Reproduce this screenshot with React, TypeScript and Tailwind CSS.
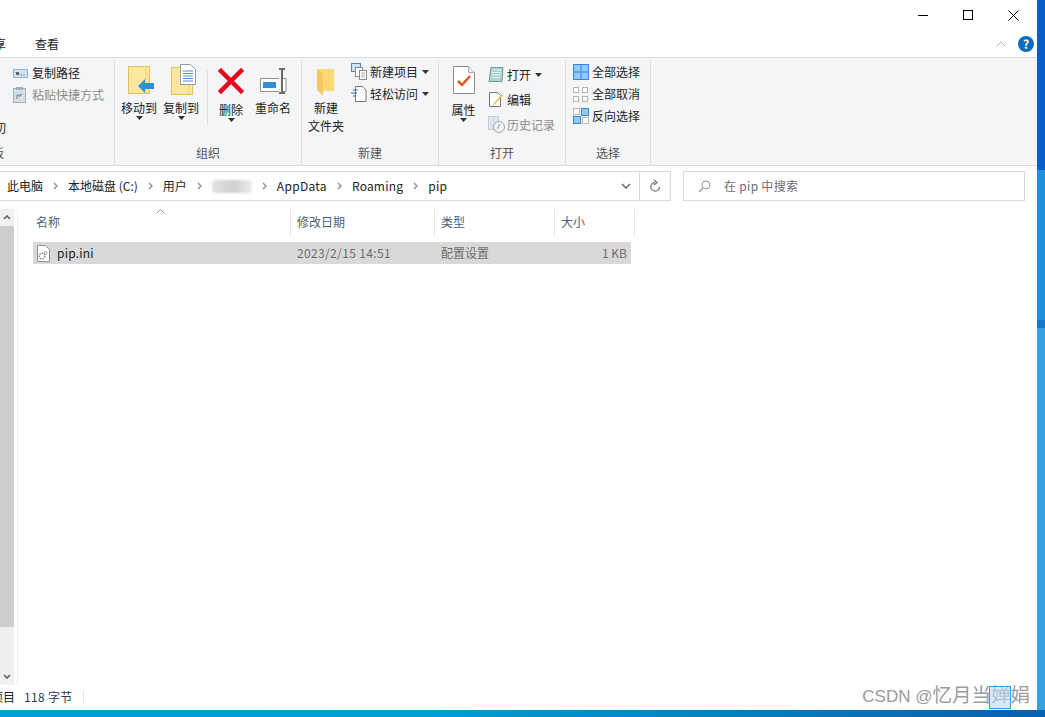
import { FC, ReactNode } from 'react';

const FONT = "font-['Noto_Sans_CJK_SC','Microsoft_YaHei',sans-serif]";

const Arrow: FC = () => (
  <svg width="7" height="4" viewBox="0 0 7 4">
    <path d="M0 0h7L3.5 4z" fill="#333" />
  </svg>
);

const Folder: FC = () => (
  <>
    <rect x="0.5" y="0.5" width="21" height="27" fill="#fde79f" stroke="#e6c163" />
    <path d="M18 1v26" stroke="#f1cf78" />
  </>
);

const MoveIcon: FC = () => (
  <svg width="34" height="29" viewBox="-6 0 34 29">
    <Folder />
    <path d="M10 20l7-7v4h9v6h-9v4z" fill="#2f8fdd" />
  </svg>
);

const CopyIcon: FC = () => (
  <svg width="36" height="31" viewBox="-8 0 36 31">
    <g transform="translate(0 3)">
      <Folder />
    </g>
    <path d="M9.5 .5h10l5 5v15h-15z" fill="#fff" stroke="#9a9a9a" />
    <path d="M12 7h10M12 9.500h10M12 12h10M12 14.500h10M12 17h10" stroke="#4d8fd8" />
  </svg>
);

const DeleteIcon: FC = () => (
  <svg width="26" height="28" viewBox="0 -1 26 28">
    <path d="M3 3l20 20M23 3L3 23" stroke="#e00b1c" strokeWidth="4.500" strokeLinecap="square" />
  </svg>
);

const RenameIcon: FC = () => (
  <svg width="30" height="28" viewBox="0 -1 30 28">
    <path d="M21 10.500H2.500v13H21M25 10.500h3v13h-3" fill="#fff" stroke="#8f8f8f" />
    <rect x="5" y="14" width="13" height="6" fill="#2f8fdd" />
    <path d="M21 1h6M21 25h6M24 1v24" stroke="#6b6b6b" strokeWidth="2" />
  </svg>
);

const NewFolderIcon: FC = () => (
  <svg width="20" height="28" viewBox="0 0 20 28">
    <path d="M1 1h17v22H7z" fill="#fdd976" />
    <path d="M1 1l6 5v22l-6-6z" fill="#f5c765" />
  </svg>
);

const NewItemIcon: FC = () => (
  <svg width="17" height="18" viewBox="0 0 17 18">
    <rect x="0.500" y="0.500" width="9" height="8" fill="#cfe3f5" stroke="#4a86c0" />
    <rect x="4.500" y="4.500" width="7" height="9" fill="#fff" stroke="#8a8a8a" />
    <rect x="8.500" y="7.500" width="7" height="9" fill="#fff" stroke="#8a8a8a" />
    <path d="M10 10h4M10 12h4M10 14h4" stroke="#b0b0b0" />
  </svg>
);

const EasyAccessIcon: FC = () => (
  <svg width="16" height="18" viewBox="0 0 16 18">
    <path d="M4.500 1.500h7l3.500 3.500v11.500h-10.500z" fill="#fff" stroke="#777" />
    <path d="M0 8h6M2 5h5M2 11h3" stroke="#2b6cb5" />
  </svg>
);

const PropertiesIcon: FC = () => (
  <svg width="24" height="30" viewBox="0 0 24 30">
    <path d="M1.500 1.500h15l6 6v21h-21z" fill="#fff" stroke="#8a8a8a" />
    <path d="M16.500 1.500v6h6" fill="#eee" stroke="#aaa" />
    <path d="M6 16l4 4 8-9" fill="none" stroke="#e8591c" strokeWidth="2.500" />
  </svg>
);

const OpenIcon: FC = () => (
  <svg width="16" height="17" viewBox="0 0 16 17">
    <path d="M3 1.500h12l-1 14H1z" fill="#a9d3d0" stroke="#6b9aa0" />
    <path d="M4 4h9M4 6.500h9M3.500 9h9M3.500 11.500h9" stroke="#dff0ee" />
  </svg>
);

const EditIcon: FC = () => (
  <svg width="15" height="17" viewBox="0 0 15 17">
    <path d="M1.500 1.500h8l3 3v11h-11z" fill="#fff" stroke="#777" />
    <path d="M14 3L6 12l-1.500 2.500L7 13l8-9z" fill="#f3b93f" />
  </svg>
);

const HistoryIcon: FC = () => (
  <svg width="17" height="17" viewBox="0 0 17 17">
    <rect x="0.500" y="0.500" width="10" height="13" fill="#dbe3ef" stroke="#c3cfdf" />
    <circle cx="11" cy="11" r="5.500" fill="#eef1f4" stroke="#9ca8b5" />
    <path d="M11 8v3l-2 1.500" fill="none" stroke="#8b98a6" />
  </svg>
);

const SelectAllIcon: FC = () => (
  <svg width="16" height="16" viewBox="0 0 16 16">
    <rect x="0.500" y="0.500" width="15" height="15" fill="#93c9f4" stroke="#2e8bdb" />
    <path d="M8 0v16M0 8h16" stroke="#2e8bdb" />
  </svg>
);

const SelectNoneIcon: FC = () => (
  <svg width="15" height="15" viewBox="0 0 15 15" fill="#fff" stroke="#b5b5b5">
    <rect x="0.500" y="0.500" width="5" height="5" />
    <rect x="9.500" y="0.500" width="5" height="5" />
    <rect x="0.500" y="9.500" width="5" height="5" />
    <rect x="9.500" y="9.500" width="5" height="5" />
  </svg>
);

const InvertIcon: FC = () => (
  <svg width="16" height="16" viewBox="0 0 16 16">
    <rect x="8.500" y="0.500" width="7" height="7" fill="#93c9f4" stroke="#2e8bdb" />
    <rect x="0.500" y="8.500" width="7" height="7" fill="#93c9f4" stroke="#2e8bdb" />
    <rect x="0.500" y="0.500" width="6" height="6" fill="#fff" stroke="#b5b5b5" />
    <rect x="9.500" y="9.500" width="6" height="6" fill="#fff" stroke="#b5b5b5" />
  </svg>
);

const LargeButton: FC<{
  icon: ReactNode;
  label: ReactNode;
  arrow?: boolean;
  className?: string;
  labelClassName?: string;
}> = ({ icon, label, arrow, className = 'w-[42px] pt-[2px]', labelClassName = 'mt-[4px]' }) => (
  <div className={`flex flex-col items-center ${className}`}>
    <div className="flex h-[32px] w-full items-end justify-center">{icon}</div>
    <div className={`text-center text-[12px] leading-[18px] whitespace-nowrap ${labelClassName}`}>{label}</div>
    {arrow && (
      <div className="mt-[-1px] flex h-[4px]">
        <Arrow />
      </div>
    )}
  </div>
);

const SmallRow: FC<{
  icon: ReactNode;
  label: string;
  arrow?: boolean;
  muted?: boolean;
  className?: string;
}> = ({ icon, label, arrow, muted, className = 'h-[22px]' }) => (
  <div className={`flex items-center ${className}`}>
    <div className="flex w-[19px] shrink-0 items-center justify-start">{icon}</div>
    <span className={`text-[12px] whitespace-nowrap ${muted ? 'text-[#8a8a8a]' : 'text-[#222]'}`}>{label}</span>
    {arrow && (
      <span className="ml-[4px] flex">
        <Arrow />
      </span>
    )}
  </div>
);

const Group: FC<{
  width: string;
  label: string;
  children: ReactNode;
  className?: string;
  labelClassName?: string;
}> = ({ width, label, children, className, labelClassName = 'justify-center' }) => (
  <section className={`flex h-full shrink-0 flex-col border-r border-[#dcdee0] ${width}`}>
    <div className={`flex h-[84px] ${className ?? ''}`}>{children}</div>
    <div className={`flex h-[16px] items-center text-[12px] text-[#555] ${labelClassName}`}>{label}</div>
  </section>
);

const Crumb: FC = () => (
  <svg className="mx-[10px] shrink-0" width="5" height="8" viewBox="0 0 5 8">
    <path d="M1 1l3 3-3 3" fill="none" stroke="#8a8a8a" strokeWidth="1.300" />
  </svg>
);

const Column: FC<{ width: string; label: string; className?: string }> = ({ width, label, className }) => (
  <div className={`flex h-full shrink-0 items-center border-r border-[#e5e5e5] pb-[2px] ${width} ${className ?? 'pl-[6px]'}`}>
    <span className="text-[12px] text-[#4c607a]">{label}</span>
  </div>
);

export default function App() {
  return (
    <div className={`flex h-[717px] w-[1045px] flex-col overflow-hidden bg-[linear-gradient(90deg,#00a0da,#009fd8_40%,#0860b0)] ${FONT} text-[#222]`}>
      <div className="flex h-[710px] shrink-0">
        <div className="flex h-[710px] w-[1037px] shrink-0 flex-col bg-white">
          {/* Title bar */}
          <header className="flex h-[30px] shrink-0 justify-end">
            <div className="flex w-[45px] items-center justify-center">
              <div className="h-px w-[10px] bg-black" />
            </div>
            <div className="flex w-[45px] items-center justify-center">
              <div className="h-[10px] w-[10px] border border-black" />
            </div>
            <div className="flex w-[47px] items-center justify-center">
              <svg width="11" height="11" viewBox="0 0 11 11">
                <path d="M.5.500l10 10M10.500.500l-10 10" stroke="#000" />
              </svg>
            </div>
          </header>

          {/* Tabs */}
          <nav className="flex h-[27px] shrink-0 items-center">
            <span className="ml-[-6px] text-[12px]">享</span>
            <span className="ml-[29px] text-[12px]">查看</span>
            <div className="ml-auto flex items-center pr-[3px]">
              <svg width="10" height="6" viewBox="0 0 10 6">
                <path d="M.5 5.500L5 1l4.500 4.500" fill="none" stroke="#b5b5b5" />
              </svg>
              <div className="ml-[12px] flex h-[16px] w-[16px] items-center justify-center rounded-full bg-[#0d6cc0] text-[12px] font-bold text-white">
                ?
              </div>
            </div>
          </nav>

          {/* Ribbon */}
          <div className="flex h-[109px] shrink-0 border-y border-[#dadbdc] bg-[#f4f5f7] pt-[3px]">
            <Group width="w-[115px]" label="板" className="overflow-hidden" labelClassName="ml-[-8px]">
              <div className="w-full pl-[13px] pt-[1px]">
                <SmallRow
                  label="复制路径"
                  icon={
                    <svg width="15" height="9" viewBox="0 0 15 9">
                      <rect x="0.500" y="0.500" width="14" height="8" fill="#cfe3f5" stroke="#8fb6d8" />
                      <path d="M3 3l1 3 1-3 1 3M8 6h1M10.500 6h1" stroke="#555" />
                    </svg>
                  }
                />
                <SmallRow
                  label="粘贴快捷方式"
                  muted
                  icon={
                    <svg width="13" height="16" viewBox="0 0 13 16">
                      <rect x="0.500" y="1.500" width="12" height="14" fill="#d6dee8" stroke="#9fb0c2" />
                      <rect x="3" y="0" width="7" height="3" fill="#9fb0c2" />
                      <path d="M4 12V8h4M6 10l3-3" stroke="#6c7f93" fill="none" />
                    </svg>
                  }
                />
                <div className="ml-[-19px] mt-[13px] text-[12px] leading-[18px]">切</div>
              </div>
            </Group>
            <Group width="w-[187px]" label="组织" className="pl-[3px]">
              <LargeButton icon={<MoveIcon />} label="移动到" arrow />
              <LargeButton icon={<CopyIcon />} label="复制到" arrow />
              <div className="ml-[5px] mr-[2px] mt-[9px] h-[55px] w-px bg-[#dcdee0]" />
              <LargeButton icon={<DeleteIcon />} label="删除" arrow labelClassName="mt-[6px]" />
              <LargeButton icon={<RenameIcon />} label="重命名" />
            </Group>
            <Group width="w-[137px]" label="新建">
              <LargeButton
                icon={<NewFolderIcon />}
                label={
                  <>
                    新建
                    <br />
                    文件夹
                  </>
                }
                className="w-[48px] pt-[3px]"
                labelClassName="mt-[3px]"
              />
              <div className="pl-[1px]">
                <SmallRow icon={<NewItemIcon />} label="新建项目" arrow />
                <SmallRow icon={<EasyAccessIcon />} label="轻松访问" arrow />
              </div>
            </Group>
            <Group width="w-[127px]" label="打开">
              <LargeButton
                icon={<PropertiesIcon />}
                label="属性"
                arrow
                className="w-[49px] pt-[2px]"
                labelClassName="mt-[6px]"
              />
              <div className="pt-[1px]">
                <SmallRow icon={<OpenIcon />} label="打开" arrow className="h-[25px]" />
                <SmallRow icon={<EditIcon />} label="编辑" className="h-[25px]" />
                <SmallRow icon={<HistoryIcon />} label="历史记录" muted className="h-[25px]" />
              </div>
            </Group>
            <Group width="w-[85px]" label="选择" className="pl-[7px]">
              <div>
                <SmallRow icon={<SelectAllIcon />} label="全部选择" />
                <SmallRow icon={<SelectNoneIcon />} label="全部取消" />
                <SmallRow icon={<InvertIcon />} label="反向选择" />
              </div>
            </Group>
          </div>

          {/* Address and search */}
          <div className="mt-[5px] flex h-[30px] shrink-0 pr-[12px]">
            <div className="flex h-full w-[671px] shrink-0 items-center border-y border-r border-[#d9d9d9] pl-[7px] text-[12px]">
              <span>此电脑</span>
              <Crumb />
              <span>本地磁盘 (C:)</span>
              <Crumb />
              <span>用户</span>
              <Crumb />
              <div className="h-[13px] w-[40px] rounded-sm bg-[linear-gradient(90deg,#e2e2e2,#cfcfcf_55%,#ececec)] blur-[1px]" />
              <Crumb />
              <span className="tracking-[0.3px]">AppData</span>
              <Crumb />
              <span className="tracking-[0.2px]">Roaming</span>
              <Crumb />
              <span className="tracking-[0.3px]">pip</span>
              <div className="ml-auto flex h-full items-center">
                <svg className="mr-[8px]" width="10" height="6" viewBox="0 0 10 6">
                  <path d="M1 1l4 4 4-4" fill="none" stroke="#666" strokeWidth="1.500" />
                </svg>
                <div className="flex h-full w-[31px] items-center justify-center border-l border-[#d9d9d9]">
                  <svg width="11" height="13" viewBox="0 0 11 13">
                    <path d="M5 2.500a4.300 4.300 0 1 0 4.500 4.300M4 0l3 2.500L4 5" fill="none" stroke="#777" strokeWidth="1.300" />
                  </svg>
                </div>
              </div>
            </div>
            <div className="ml-[12px] flex h-full flex-1 items-center border border-[#d9d9d9] pl-[14px]">
              <svg width="13" height="13" viewBox="0 0 13 13">
                <circle cx="8" cy="5" r="4" fill="none" stroke="#999" />
                <path d="M5 8l-4 4" stroke="#b98d6c" strokeWidth="1.200" />
              </svg>
              <span className="ml-[13px] text-[12px] tracking-[0.3px] text-[#6d6d6d]">在 pip 中搜索</span>
            </div>
          </div>

          {/* Main area */}
          <div className="mt-[8px] flex min-h-0 flex-1">
            <div className="flex w-[14px] shrink-0 flex-col bg-[#f0f0f0]">
              <div className="flex h-[17px] items-center justify-center">
                <svg width="8" height="5" viewBox="0 0 8 5">
                  <path d="M1 4l3-3 3 3" fill="none" stroke="#606060" strokeWidth="1.600" />
                </svg>
              </div>
              <div className="h-[401px] bg-[#cdcdcd]" />
              <div className="flex-1" />
              <div className="flex h-[17px] items-center justify-center">
                <svg width="8" height="5" viewBox="0 0 8 5">
                  <path d="M1 1l3 3 3-3" fill="none" stroke="#606060" strokeWidth="1.600" />
                </svg>
              </div>
            </div>
            <div className="ml-[3px] flex-1 border-l border-[#f0f0f0]">
              <div className="relative flex h-[27px]">
                <svg className="absolute left-[138px] top-0" width="9" height="5" viewBox="0 0 9 5">
                  <path d="M.5 4.500l4-4 4 4" fill="none" stroke="#9a9a9a" />
                </svg>
                <Column width="w-[273px]" label="名称" className="pl-[18px]" />
                <Column width="w-[144px]" label="修改日期" />
                <Column width="w-[120px]" label="类型" />
                <Column width="w-[80px]" label="大小" />
              </div>
              <div className="ml-[15px] mt-[6px] flex h-[22px] w-[598px] items-center bg-[#d9d9d9] text-[12px]">
                <div className="flex w-[264px] items-center pl-[3px]">
                  <svg width="15" height="17" viewBox="0 0 15 17">
                    <path d="M1.500.500h8l4 4v12h-12z" fill="#fff" stroke="#909090" />
                    <circle cx="6" cy="11" r="2.800" fill="none" stroke="#8a8a8a" strokeWidth="1.500" strokeDasharray="1.500 1" />
                    <circle cx="9.500" cy="8" r="1.500" fill="none" stroke="#a0a0a0" />
                  </svg>
                  <span className="ml-[6px] text-[12px] tracking-[0.2px]">pip.ini</span>
                </div>
                <span className="w-[144px] tracking-[0.35px] text-[#6d6d6d]">2023/2/15 14:51</span>
                <span className="w-[120px] text-[#6d6d6d]">配置设置</span>
                <span className="w-[66px] pr-[0px] text-right text-[#6d6d6d]">1 KB</span>
              </div>
            </div>
          </div>

          {/* Status bar */}
          <footer className="relative flex h-[25px] shrink-0 items-center pb-[1px] text-[12px]">
            <span className="ml-[-9px]">项目</span>
            <span className="ml-[9px] tracking-[0.3px] text-[#2b3a55]">118 字节</span>
            <div className="ml-[11px] h-[14px] w-px bg-[#e6e6e6]" />
            <span className="absolute bottom-[0px] right-[7px] leading-[24px] text-[#9b9b9b] font-['Liberation_Sans','Noto_Sans_CJK_SC',sans-serif] whitespace-nowrap">
              <span className="text-[17px]">CSDN @</span>
              <span className="text-[19.5px]">忆月当婵娟</span>
            </span>
            <div className="absolute bottom-[1px] right-[26px] h-[23px] w-[22px] border border-[#2ea0e0] bg-[#bcdcf3]/60" />
          </footer>
        </div>

        {/* Desktop showing behind the window */}
        <div className="flex flex-1 flex-col">
          <div className="h-[170px] bg-[#0a5ec8]" />
          <div className="h-[150px] bg-[#2090dc]" />
          <div className="h-[8px] bg-[#1578c8]" />
          <div className="flex-1 bg-[#35a0e0]" />
        </div>
      </div>
    </div>
  );
}
